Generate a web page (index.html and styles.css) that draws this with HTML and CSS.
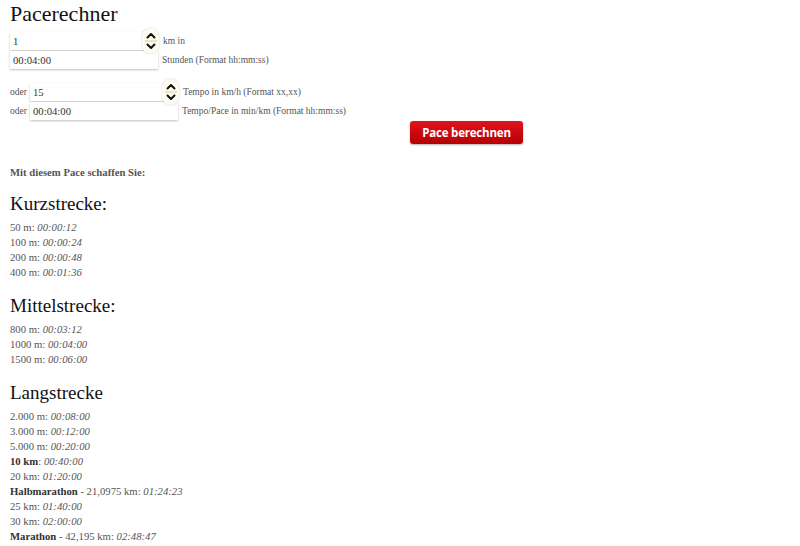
FILE: index.html
```html
<!DOCTYPE html>
<html lang="de">
<head>
  <meta charset="UTF-8" />
  <title>Pacerechner</title>
  <link rel="stylesheet" href="styles.css">
</head>
<body>

  <h1>Pacerechner</h1>

  <!-- Eingabe -->
  <div class="calc">
    <div class="row">
      <input type="text" class="field w140" value="1" />
      <span class="spin">
        <svg width="16" height="24" viewBox="0 0 16 24">
          <line x1="2" y1="12" x2="14" y2="12" stroke="#e6dfa6" stroke-width="1.5"/>
          <path d="M4.5 8.5 L8 5 L11.5 8.5" fill="none" stroke="#111" stroke-width="2" stroke-linecap="round" stroke-linejoin="round"/>
          <path d="M4.5 15.5 L8 19 L11.5 15.5" fill="none" stroke="#111" stroke-width="2" stroke-linecap="round" stroke-linejoin="round"/>
        </svg>
      </span>
      <span class="label">km in</span>
    </div>
    <div class="row">
      <input type="text" class="field w148" value="00:04:00" />
      <span class="label">Stunden (Format hh:mm:ss)</span>
    </div>

    <div class="row gap-top">
      <span class="oder">oder</span>
      <input type="text" class="field w140" value="15" />
      <span class="spin">
        <svg width="16" height="24" viewBox="0 0 16 24">
          <line x1="2" y1="12" x2="14" y2="12" stroke="#e6dfa6" stroke-width="1.5"/>
          <path d="M4.5 8.5 L8 5 L11.5 8.5" fill="none" stroke="#111" stroke-width="2" stroke-linecap="round" stroke-linejoin="round"/>
          <path d="M4.5 15.5 L8 19 L11.5 15.5" fill="none" stroke="#111" stroke-width="2" stroke-linecap="round" stroke-linejoin="round"/>
        </svg>
      </span>
      <span class="label">Tempo in km/h (Format xx,xx)</span>
    </div>
    <div class="row">
      <span class="oder">oder</span>
      <input type="text" class="field w148" value="00:04:00" />
      <span class="label">Tempo/Pace in min/km (Format hh:mm:ss)</span>
    </div>

    <div class="btn-row">
      <button class="calc-btn">Pace berechnen</button>
    </div>
  </div>

  <!-- Ergebnis -->
  <p class="intro">Mit diesem Pace schaffen Sie:</p>

  <h2>Kurzstrecke:</h2>
  <ul class="times">
    <li>50 m: <em>00:00:12</em></li>
    <li>100 m: <em>00:00:24</em></li>
    <li>200 m: <em>00:00:48</em></li>
    <li>400 m: <em>00:01:36</em></li>
  </ul>

  <h2>Mittelstrecke:</h2>
  <ul class="times">
    <li>800 m: <em>00:03:12</em></li>
    <li>1000 m: <em>00:04:00</em></li>
    <li>1500 m: <em>00:06:00</em></li>
  </ul>

  <h2>Langstrecke</h2>
  <ul class="times">
    <li>2.000 m: <em>00:08:00</em></li>
    <li>3.000 m: <em>00:12:00</em></li>
    <li>5.000 m: <em>00:20:00</em></li>
    <li><b>10 km</b>: <em>00:40:00</em></li>
    <li>20 km: <em>01:20:00</em></li>
    <li><b>Halbmarathon</b> - 21,0975 km: <em>01:24:23</em></li>
    <li>25 km: <em>01:40:00</em></li>
    <li>30 km: <em>02:00:00</em></li>
    <li><b>Marathon</b> - 42,195 km: <em>02:48:47</em></li>
  </ul>

</body>
</html>
```

FILE: styles.css
```css
* {
  box-sizing: border-box;
}

body {
  font-family: "Liberation Serif", "Times New Roman", serif;
  font-size: 10.7px;
  line-height: 15px;
  color: #555;
  background: #fff;
  margin: 0;
  padding: 0 10px;
}

h1 {
  font-size: 22px;
  font-weight: normal;
  color: #111;
  line-height: 26px;
  margin: 1px 0 5px;
}

h2 {
  font-size: 19px;
  font-weight: normal;
  color: #111;
  line-height: 24px;
  margin: 0 0 4px;
}

/* Formular */
.row {
  display: flex;
  align-items: center;
  height: 18px;
  margin-bottom: 1px;
}

.row.gap-top {
  margin-top: 14px;
}

.field {
  height: 18px;
  border: none;
  box-shadow: 0 1px 2px rgba(0, 0, 0, 0.25);
  padding: 0 3px;
  font-family: "Liberation Serif", "Times New Roman", serif;
  font-size: 10.7px;
  color: #333;
  background: #fff;
}

.w140 { width: 140px; }
.w148 { width: 148px; }

.spin {
  display: flex;
  align-items: center;
  justify-content: center;
  width: 17px;
  height: 26px;
  margin-left: -8px;
  background: #fdfcf2;
  border-radius: 9px;
  box-shadow: 0 0 2px rgba(0, 0, 0, 0.2);
  position: relative;
}

.label {
  margin-left: 4px;
  font-size: 9.5px;
}

.oder {
  width: 20px;
  font-size: 9.5px;
}

.btn-row {
  width: 513px;
  display: flex;
  justify-content: flex-end;
}

.calc-btn {
  width: 113px;
  height: 23px;
  border: none;
  border-radius: 3px;
  background: linear-gradient(#e0141a, #b50006);
  color: #fff;
  font-family: "Open Sans", "DejaVu Sans", sans-serif;
  font-weight: bold;
  font-size: 11.5px;
  letter-spacing: -0.2px;
  cursor: pointer;
  box-shadow: 0 1px 2px rgba(0, 0, 0, 0.3);
}

/* Ergebnisse */
.intro {
  font-weight: bold;
  margin: 21px 0 12px;
}

.times {
  list-style: none;
  margin: 0 0 14px;
  padding: 0;
}

.times em {
  font-style: italic;
}

.times b {
  color: #333;
}
```
